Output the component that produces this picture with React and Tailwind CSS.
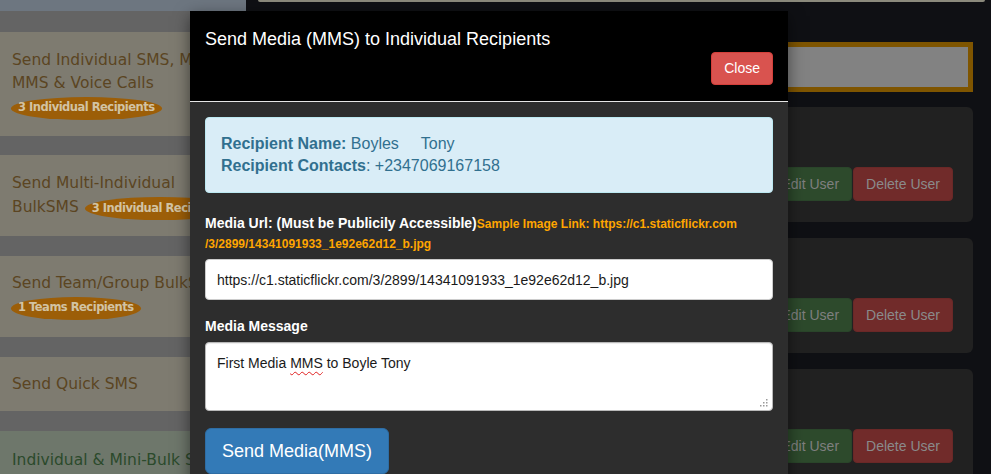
import React from "react";

function Badge({ children, color = "bg-[#9c5e08]", text = "text-[#d2c3a3]" }) {
  return (
    <span
      className={`inline-flex items-center h-[23px] px-[7px] rounded-[50%] ${color} ${text} font-bold text-[11.5px] tracking-[-0.5px] whitespace-nowrap`}
    >
      {children}
    </span>
  );
}

function LeftColumn() {
  return (
    <div className="w-[246px] shrink-0 bg-[#646464] flex flex-col overflow-hidden font-['Comic_Sans_MS','DejaVu_Sans',sans-serif] text-[15.5px] text-[#5b4522]">
      <div className="h-[11px] shrink-0 bg-[#6d7680]" />
      <div className="mt-[21px] h-[104px] shrink-0 bg-[#7e7b70] px-[12px] pt-[17px]">
        <div className="leading-[23px] whitespace-nowrap">Send Individual SMS, MMS</div>
        <div className="leading-[23px] whitespace-nowrap">MMS &amp; Voice Calls</div>
        <div className="h-[26px] flex items-center -ml-[1px]">
          <Badge>3 Individual Recipients</Badge>
        </div>
      </div>
      <div className="mt-[19px] h-[81px] shrink-0 bg-[#7e7b70] px-[12px] pt-[17px]">
        <div className="leading-[23px] whitespace-nowrap">Send Multi-Individual</div>
        <div className="h-[26px] flex items-center whitespace-nowrap">
          <span>BulkSMS</span>
          <span className="ml-[6px]">
            <Badge>3 Individual Recipients</Badge>
          </span>
        </div>
      </div>
      <div className="mt-[20px] h-[81px] shrink-0 bg-[#7e7b70] px-[12px] pt-[16px]">
        <div className="leading-[23px] whitespace-nowrap">Send Team/Group BulkSMS</div>
        <div className="h-[26px] flex items-center -ml-[1px]">
          <Badge>1 Teams Recipients</Badge>
        </div>
      </div>
      <div className="mt-[20px] h-[54px] shrink-0 bg-[#7e7b70] px-[12px] flex items-center">
        <div className="leading-[23px] whitespace-nowrap">Send Quick SMS</div>
      </div>
      <div className="mt-[20px] h-[90px] shrink-0 bg-[#6e776b] px-[12px] pt-[18px] text-[#2b4a2b]">
        <div className="leading-[23px] whitespace-nowrap">Individual &amp; Mini-Bulk SMS</div>
        <div className="h-[26px] flex items-start pt-[4px] pl-[47px]">
          <Badge color="bg-[#2f6b2f]" text="text-[#cfd8cc]">2 Mini-Bulk Groups</Badge>
        </div>
      </div>
    </div>
  );
}

function UserCard({ first }) {
  return (
    <div
      className={`${first ? "mt-[15px]" : "mt-[16px]"} h-[115px] shrink-0 rounded-[6px] bg-[#212121] flex justify-end items-start pt-[60px] pr-[20px]`}
    >
      <button className="h-[34px] px-[12px] rounded-[4px] bg-[#2d4a2c] border border-[#2a452a] text-[#7f7f7f] text-[14px]">
        Edit User
      </button>
      <button className="ml-[1px] h-[34px] px-[12px] rounded-[4px] bg-[#712b2a] border border-[#6a2827] text-[#8a8a8a] text-[14px]">
        Delete User
      </button>
    </div>
  );
}

function RightArea() {
  return (
    <div className="flex-1 pl-[12px] pr-[6px] font-['Liberation_Sans',Arial,sans-serif]">
      <div className="h-[2px] bg-[#8b8a7c] rounded-b-[2px]" />
      <div className="mr-[12px]">
        <div className="mt-[40px] h-[50px] border-[5px] border-[#7f5500] bg-[#828282]" />
        <UserCard first />
        <UserCard />
        <UserCard />
      </div>
    </div>
  );
}

function Grip() {
  return (
    <svg className="absolute right-[4px] bottom-[3px]" width="8" height="8" viewBox="0 0 8 8">
      <g fill="#9a9a9a">
        <rect x="6" y="0" width="1.5" height="1.5" />
        <rect x="3" y="3" width="1.5" height="1.5" />
        <rect x="6" y="3" width="1.5" height="1.5" />
        <rect x="0" y="6" width="1.5" height="1.5" />
        <rect x="3" y="6" width="1.5" height="1.5" />
        <rect x="6" y="6" width="1.5" height="1.5" />
      </g>
    </svg>
  );
}

function Modal() {
  return (
    <div className="absolute left-[190px] top-[11px] w-[598px] h-[480px] bg-[#2d2d2d] shadow-[0_5px_15px_rgba(0,0,0,0.5)] font-['Liberation_Sans',Arial,sans-serif]">
      <div className="bg-black border-b border-[#e5e5e5] px-[15px] pt-[18px] pb-[16px]">
        <h4 className="text-white text-[18px] leading-[20px]">
          Send Media (MMS) to Individual Recipients
        </h4>
        <div className="flex justify-end mt-[3px]">
          <button className="h-[33px] px-[12px] rounded-[4px] bg-[#d9534f] border border-[#d43f3a] text-white text-[14px]">
            Close
          </button>
        </div>
      </div>
      <div className="px-[15px] pt-[15px]">
        <div className="rounded-[4px] border border-[#bce8f1] bg-[#d9edf7] px-[15px] py-[15px] text-[#31708f] text-[16px] leading-[22px]">
          <div>
            <b>Recipient Name:</b> Boyles{"\u00a0\u00a0\u00a0\u00a0 "}Tony
          </div>
          <div>
            <b>Recipient Contacts</b>: +2347069167158
          </div>
        </div>
        <label className="block mt-[20px] text-white font-bold text-[14px] leading-[20px]">
          Media Url: (Must be Publicily Accessible)
          <span className="text-[#ffa500] text-[12px] leading-[16px]">
            Sample Image Link: https://c1.staticflickr.com<wbr />/3/2899/14341091933_1e92e62d12_b.jpg
          </span>
        </label>
        <input
          readOnly
          value="https://c1.staticflickr.com/3/2899/14341091933_1e92e62d12_b.jpg"
          className="mt-[6px] block w-full h-[41px] bg-white border border-[#ccc] rounded-[4px] px-[11px] text-[14px] text-[#1a1a1a] outline-none"
        />
        <label className="block mt-[16px] text-white font-bold text-[14px] leading-[20px]">
          Media Message
        </label>
        <div className="relative mt-[6px] h-[69px] bg-white border border-[#b9b9b9] rounded-[4px] px-[11px] pt-[10px] text-[14px] leading-[20px] text-[#1a1a1a] shadow-[inset_0_1px_1px_rgba(0,0,0,0.075)]">
          First Media{" "}
          <span className="underline decoration-wavy decoration-[#e02020] decoration-1 underline-offset-[3px]">
            MMS
          </span>{" "}
          to Boyle Tony
          <Grip />
        </div>
        <button className="mt-[17px] h-[46px] px-[16px] rounded-[6px] bg-[#337ab7] border border-[#2e6da4] text-white text-[18px]">
          Send Media(MMS)
        </button>
      </div>
    </div>
  );
}

export default function App() {
  return (
    <div className="relative w-[991px] h-[474px] overflow-hidden bg-[#0f1014]">
      <div className="flex h-full">
        <LeftColumn />
        <RightArea />
      </div>
      <Modal />
    </div>
  );
}
